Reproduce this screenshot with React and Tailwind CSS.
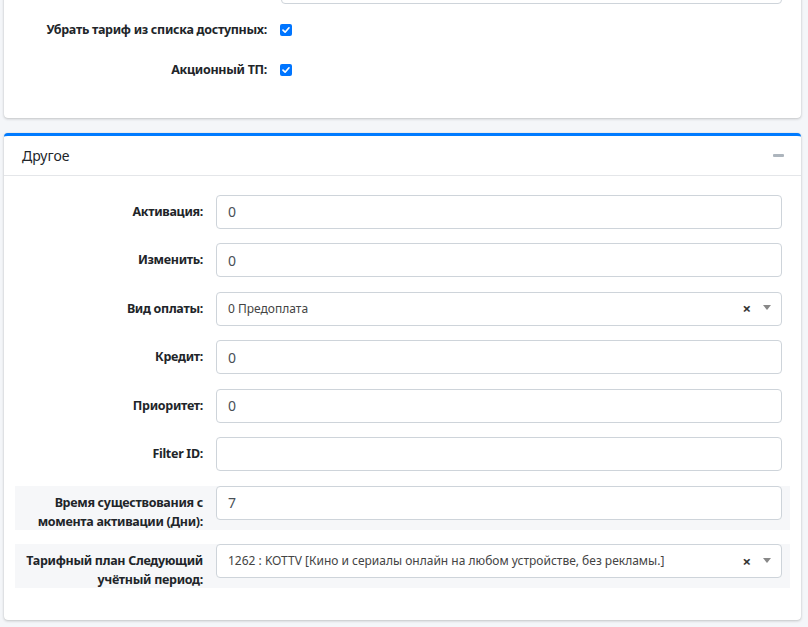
import React from "react";

const font = { fontFamily: '"Noto Sans", "Open Sans", sans-serif' };

function Check() {
  return (
    <div className="w-[12px] h-[12px] rounded-[2px] bg-[#0075ff] flex items-center justify-center">
      <svg width="10" height="10" viewBox="0 0 10 10">
        <path d="M2 5.2 L4.1 7.2 L8 2.8" fill="none" stroke="#fff" strokeWidth="1.7" strokeLinecap="round" strokeLinejoin="round" />
      </svg>
    </div>
  );
}

function Label({ children }) {
  return (
    <div className="w-[201px] shrink-0 pr-[13px] pt-[7px] text-right text-[12.5px] tracking-[-0.3px] leading-[19px] font-bold text-[#212529] whitespace-nowrap">
      {children}
    </div>
  );
}

function InputRow({ label, value, gray }) {
  return (
    <div className={"flex " + (gray ? "h-[44px] bg-[#f6f7f9]" : "h-[34px]")}>
      <Label>{label}</Label>
      <div className="flex-1 mr-[8px] h-[34px] border border-[#ced4da] rounded-[4px] bg-white flex items-center pl-[11px] text-[14px] text-[#495057]">
        {value}
      </div>
    </div>
  );
}

function SelectRow({ label, value, gray }) {
  return (
    <div className={"flex " + (gray ? "h-[44px] bg-[#f6f7f9]" : "h-[34px]")}>
      <Label>{label}</Label>
      <div className="flex-1 mr-[8px] h-[34px] border border-[#ced4da] rounded-[4px] bg-white flex items-center pl-[11px] pr-[10px] text-[12px] text-[#444]">
        <span className="flex-1 truncate">{value}</span>
        <span className="text-[15px] font-bold text-[#333] leading-none mr-[12px]">×</span>
        <span className="w-0 h-0 border-l-[4px] border-r-[4px] border-t-[5px] border-l-transparent border-r-transparent border-t-[#888] mt-[-2px]"></span>
      </div>
    </div>
  );
}

export default function App() {
  return (
    <div className="min-h-[627px] bg-[#f4f6f9] pl-[4px] pr-[7px] overflow-hidden" style={font}>
      {/* Card 1 (partially visible) */}
      <div className="-mt-[50px] bg-white rounded-[4px] shadow-[0_0_1px_rgba(0,0,0,0.125),0_1px_3px_rgba(0,0,0,0.2)] pt-[20px] pb-[28px]">
        <div className="flex h-[34px]">
          <div className="w-[277px] shrink-0"></div>
          <div className="flex-1 mr-[19px] border border-[#ced4da] rounded-[4px]"></div>
        </div>
        <div className="flex items-center h-[40px] mt-[6px]">
          <div className="w-[263px] shrink-0 text-right text-[12.5px] tracking-[-0.3px] font-bold text-[#212529]">Убрать тариф из списка доступных:</div>
          <div className="ml-[13px]"><Check /></div>
        </div>
        <div className="flex items-center h-[40px]">
          <div className="w-[263px] shrink-0 text-right text-[12.5px] tracking-[-0.3px] font-bold text-[#212529]">Акционный ТП:</div>
          <div className="ml-[13px]"><Check /></div>
        </div>
      </div>

      {/* Card 2 */}
      <div className="mt-[15px] bg-white rounded-[4px] border-t-[3px] border-[#007bff] shadow-[0_0_1px_rgba(0,0,0,0.125),0_1px_3px_rgba(0,0,0,0.2)]">
        <div className="h-[40px] border-b border-[#e4e6e9] flex items-center pl-[18px] pr-[17px]">
          <span className="flex-1 text-[14px] text-[#212529]">Другое</span>
          <span className="w-[11px] h-[3px] bg-[#adb5bd] rounded-[1px]"></span>
        </div>
        <div className="pt-[18.5px] pb-[32px] px-[11px] flex flex-col gap-[14.5px]">
          <InputRow label="Активация:" value="0" />
          <InputRow label="Изменить:" value="0" />
          <SelectRow label="Вид оплаты:" value="0 Предоплата" />
          <InputRow label="Кредит:" value="0" />
          <InputRow label="Приоритет:" value="0" />
          <InputRow label="Filter ID:" value="" />
          <InputRow label={<>Время существования с<br />момента активации (Дни):</>} value="7" gray />
          <SelectRow label={<>Тарифный план Следующий<br />учётный период:</>} value="1262 : KOTTV [Кино и сериалы онлайн на любом устройстве, без рекламы.]" gray />
        </div>
      </div>
    </div>
  );
}
